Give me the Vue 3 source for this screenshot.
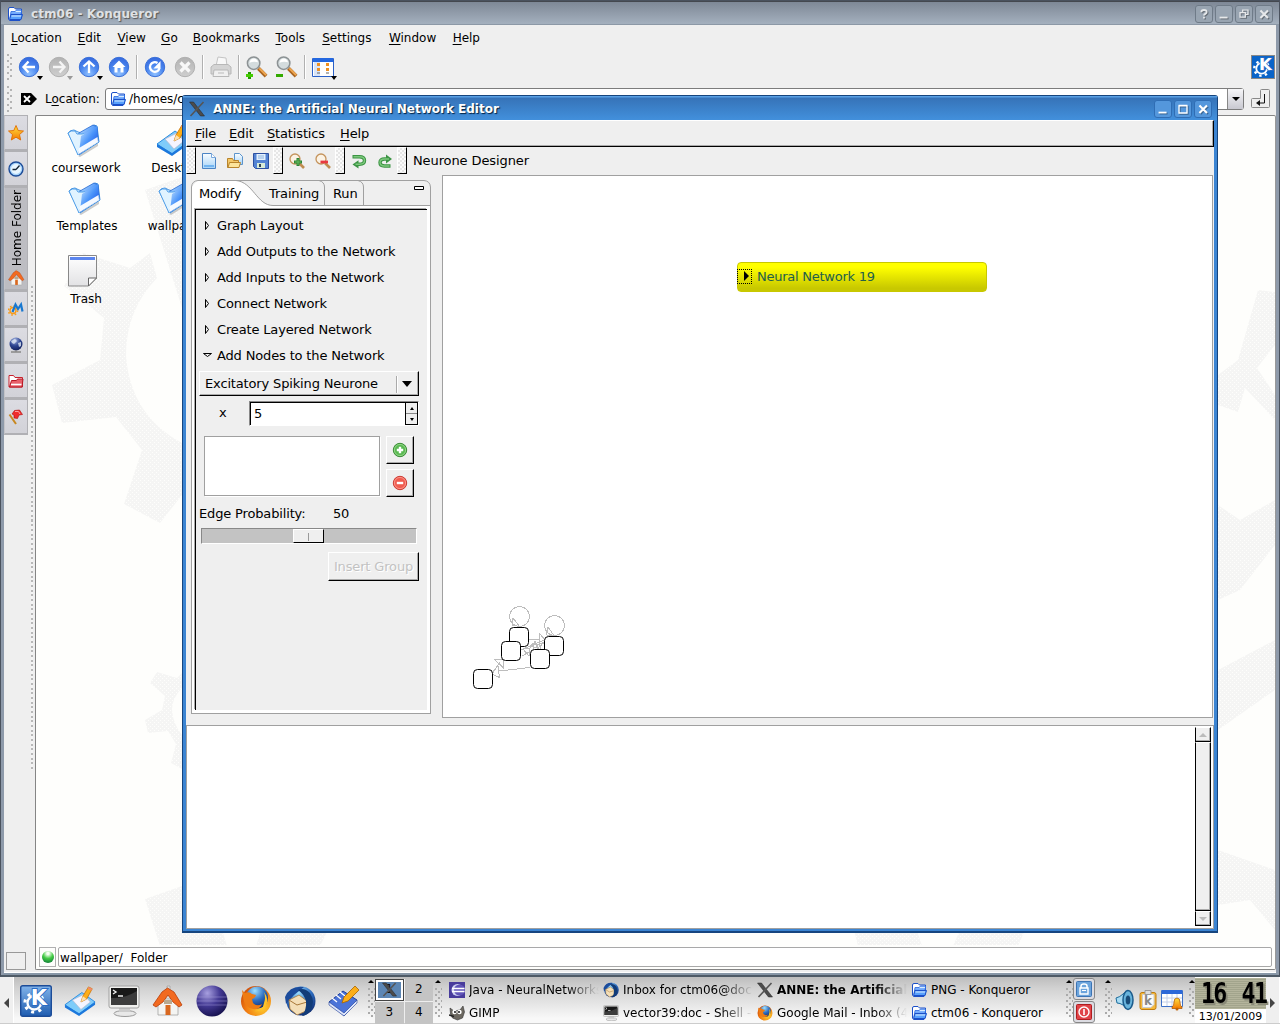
<script setup>
const konqMenu = [
  ['L', 'ocation', 50], ['E', 'dit', 23], ['V', 'iew', 27], ['G', 'o', 15], ['B', 'ookmarks', 66],
  ['T', 'ools', 30], ['S', 'ettings', 50], ['W', 'indow', 47], ['H', 'elp', 27]
]
const konqButtons = ['help', 'min', 'restore', 'close']
const anneButtons = ['min', 'max', 'close']
const tabsTop = ['star', 'clock']
const tabsBottom = ['metabar', 'globe', 'redfolder', 'pin']
const files = [
  { name: 'coursework', icon: 'folder3d', x: 48, y: 123 },
  { name: 'Desktop', icon: 'desk', x: 138, y: 123 },
  { name: 'Templates', icon: 'folder3d', x: 49, y: 181 },
  { name: 'wallpaper', icon: 'folder3d', x: 139, y: 181 },
  { name: 'Trash', icon: 'page', x: 48, y: 254 }
]
const anneMenu = [['F', 'ile', 'w-file'], ['E', 'dit', 'w-edit'], ['S', 'tatistics', 'w-stat'], ['H', 'elp', 'w-help']]
const sections = ['Graph Layout', 'Add Outputs to the Network', 'Add Inputs to the Network', 'Connect Network', 'Create Layered Network', 'Add Nodes to the Network']
const launchers = ['kmenu', 'desk', 'terminal', 'house', 'eclipse', 'firefox', 'thunderbird', 'notes']
const tasks = [
  { icon: 'javaee', text: 'Java - NeuralNetworks' },
  { icon: 'thunderbird', text: 'Inbox for ctm06@doc.ic' },
  { icon: 'xlogo', text: 'ANNE: the Artificial N', active: true },
  { icon: 'folder', text: 'PNG - Konqueror' },
  { icon: 'gimp', text: 'GIMP' },
  { icon: 'terminal', text: 'vector39:doc - Shell - K' },
  { icon: 'firefox', text: 'Google Mail - Inbox (41' },
  { icon: 'folder', text: 'ctm06 - Konqueror' }
]
const pager = [1, 2, 3, 4]
const nodes = [[509.5, 627.5], [501.5, 641.5], [544.5, 636.5], [530.5, 649.5], [473.5, 669.5]]
</script>

<template>
  <div class="desktop">
    <svg class="sprite" width="0" height="0">
      <defs>
        <radialGradient id="gBall" cx=".5" cy=".85" r=".9"><stop offset="0" stop-color="#8fc0ff" /><stop offset=".5" stop-color="#4a86ee" /><stop offset="1" stop-color="#3264dc" /></radialGradient>
        <linearGradient id="gGrey" x2="0" y2="1"><stop offset="0" stop-color="#b2b2b2" /><stop offset="1" stop-color="#cfcfcf" /></linearGradient>
        <linearGradient id="gFold" x2="1" y2="1"><stop offset="0" stop-color="#d8f0ff" /><stop offset=".5" stop-color="#4a94fa" /><stop offset="1" stop-color="#0a3ce0" /></linearGradient>
        <linearGradient id="gFoldS" x2="0" y2="1"><stop offset="0" stop-color="#9cc8ff" /><stop offset="1" stop-color="#2f78f4" /></linearGradient>
        <linearGradient id="gOrange" x2="0" y2="1"><stop offset="0" stop-color="#ffe040" /><stop offset="1" stop-color="#f47a00" /></linearGradient>
        <linearGradient id="gPage" x2="0" y2="1"><stop offset="0" stop-color="#fff" /><stop offset="1" stop-color="#e2e2e4" /></linearGradient>
        <linearGradient id="gDoc" x2="0" y2="1"><stop offset="0" stop-color="#fafdff" /><stop offset="1" stop-color="#a8d4f8" /></linearGradient>
        <radialGradient id="gEcl" cx=".35" cy=".25" r=".8"><stop offset="0" stop-color="#a8a0e0" /><stop offset=".5" stop-color="#443a94" /><stop offset="1" stop-color="#15104c" /></radialGradient>
        <radialGradient id="gBlueBall" cx=".4" cy=".2" r=".9"><stop offset="0" stop-color="#9fe0ff" /><stop offset=".5" stop-color="#2c6cc0" /><stop offset="1" stop-color="#0c2060" /></radialGradient>
        <radialGradient id="gNavy" cx=".4" cy=".2" r=".9"><stop offset="0" stop-color="#a8b8e4" /><stop offset=".5" stop-color="#2c4490" /><stop offset="1" stop-color="#0c1850" /></radialGradient>
        <radialGradient id="gFox" cx=".7" cy=".7" r=".9"><stop offset="0" stop-color="#ffd030" /><stop offset=".6" stop-color="#f07a10" /><stop offset="1" stop-color="#c03c08" /></radialGradient>
        <linearGradient id="gK" x2="0" y2="1"><stop offset="0" stop-color="#82b4ea" /><stop offset="1" stop-color="#1e5cb0" /></linearGradient>
        <pattern id="dither" width="4" height="4" patternUnits="userSpaceOnUse"><rect width="4" height="4" fill="#f5f5f4" /><rect width="1" height="1" fill="#fefefc" /><rect x="2" y="2" width="1" height="1" fill="#fefefc" /></pattern>
      </defs>

      <symbol id="folder" viewBox="0 0 16 16"><path d="M1.500 13V3Q1.500 1.500 3 1.500h4L8.500 3h6v9l-1.500 2.500H2.500z" fill="#fff" stroke="#1c50c8" /><path d="M3 12l1-6.500h4l1.500-1.500h5V6l-1.500 6.500z" fill="url(#gFoldS)" stroke="#2866e0" stroke-width=".8" /><path d="M2.500 13.500L4 8.500h11.500L14 13.500z" fill="#58a0fc" stroke="#1c50c8" /><path d="M4.500 10h9.500M9 5.500h5" stroke="#d8ecff" /></symbol>
      <symbol id="folder3d" viewBox="0 0 34 34"><path d="M12 33L32 20v3L14 34z" fill="#999" opacity=".5" /><path d="M2 10q2-3 6-3l4 2 4 1 12-8 3 1 2 16-20 13z" fill="#d9efff" stroke="#3b8de0" /><path d="M11 15l2-5L27 2l4 2 1 14-19 13z" fill="url(#gFold)" stroke="#2468d0" stroke-width=".8" /><path d="M2 10q3-3 7-2l2 3h5q2-1 3 1l-7 20z" fill="#e0f3ff" stroke="#4f9ee8" /><path d="M15 13L31 3l1 15-19 12z" fill="url(#gFold)" /><path d="M13 25l18.500-11 .5 5-20 12.500z" fill="#fff" opacity=".95" /></symbol>
      <symbol id="desk" viewBox="0 0 34 34"><path d="M1 21L19 8l14 10-17 13z" fill="#7fccfa" stroke="#2a8ce0" /><path d="M1 21l15 9 17-12v3L16 33 1 24z" fill="#1c78dc" /><path d="M9 16l12-6 7 8-10 8z" fill="#f4f4ff" stroke="#b8b8cc" stroke-width=".7" /><path d="M18 18l2-6 6-10 4 2-6 11z" fill="#fcae18" stroke="#c87000" stroke-width=".8" /><path d="M18 18l2-6 4 3z" fill="#fbe0b0" /><path d="M26 2l4 2-1 2-4-2z" fill="#f08a70" /></symbol>
      <symbol id="page" viewBox="0 0 34 34"><path d="M2.500 1.500h28V24l-8 8h-20z" fill="url(#gPage)" stroke="#888" /><path d="M4 3h25v3H4z" fill="#5c86ee" /><path d="M30.500 24h-8v8z" fill="#fff" stroke="#666" /></symbol>
      <symbol id="star" viewBox="0 0 16 16"><path d="M8 .5l2.200 5 5.300.5-4 3.600 1.200 5.400L8 12.200 3.300 15l1.200-5.400-4-3.600 5.300-.5z" fill="url(#gOrange)" stroke="#e06c00" stroke-width=".9" /></symbol>
      <symbol id="clock" viewBox="0 0 16 16"><circle cx="8" cy="8" r="7" fill="#a8d4fa" stroke="#1c4c98" stroke-width="1.400" /><circle cx="8" cy="8" r="5" fill="#e8f6ff" /><path d="M8 8.500l3.500-4M8 8.500H4.500" stroke="#123" stroke-width="1.300" /></symbol>
      <symbol id="metabar" viewBox="0 0 16 16"><circle cx="5" cy="9.500" r="3" fill="none" stroke="#f79a18" stroke-width="1.400" /><circle cx="5" cy="9.500" r="4.600" fill="none" stroke="#f79a18" stroke-width="1.500" stroke-dasharray="1.600 2" /><path d="M4.500 11L7.500 3.500l2.500 4.500L13 3.500l1.500 7" fill="none" stroke="#1878d0" stroke-width="2.200" /></symbol>
      <symbol id="globe" viewBox="0 0 16 16"><circle cx="8" cy="7" r="6.500" fill="url(#gNavy)" /><path d="M3 4l4-2 2 2-3 3-2-1zM10 6l3-1v4l-2 1z" fill="#dfe8f4" opacity=".8" /><path d="M3 15h10M8 13v2" stroke="#888" stroke-width="1.300" /></symbol>
      <symbol id="redfolder" viewBox="0 0 16 16"><path d="M1 14V2.500h4.500L7 4.500h7.500V14z" fill="#fff" stroke="#c8202c" /><path d="M1.500 14l2-6.500h5L9.500 6H15l-1 8z" fill="#e8606a" stroke="#b81824" /><path d="M3 11.500h10.500" stroke="#fff" stroke-width="1.600" /></symbol>
      <symbol id="pin" viewBox="0 0 16 16"><path d="M1.500 5.500L8 15" stroke="#c88820" stroke-width="2" /><path d="M4 5l2.500-3.500 5-.5 3 4.500-3.500.5-1.500 3.500-3.500-.5 0-3z" fill="#f02c2c" stroke="#b00c0c" stroke-width=".6" /><path d="M7 2.500h3.500L12 5" fill="none" stroke="#ff9c9c" /></symbol>
      <symbol id="house" viewBox="0 0 32 32"><path d="M6 14h20v16H6z" fill="#f4f4f2" stroke="#999" stroke-width=".7" /><path d="M15 1h3v4h-3z" fill="#ddd" stroke="#888" stroke-width=".5" /><path d="M15.500 3L10 7 1 20l3 2 7-5 5-7 5 7 6 5 3-2-8-13z" fill="#f26a20" stroke="#b83c08" stroke-width=".8" /><path d="M13.500 20h5v10h-5z" fill="#d86820" /><path d="M12 15h8v4h-8z" fill="#b8a890" /></symbol>
      <symbol id="bBack" viewBox="0 0 22 22"><circle cx="11" cy="11" r="9.700" fill="url(#gBall)" stroke="#3a70d8" /><path d="M10.500 5.500L5.500 11l5 5.500M6 11h11" fill="none" stroke="#fff" stroke-width="2.300" /></symbol>
      <symbol id="bFwd" viewBox="0 0 22 22"><circle cx="11" cy="11" r="9.700" fill="url(#gGrey)" stroke="#b0b0b0" /><path d="M11.500 5.500l5 5.500-5 5.500M16 11H5" fill="none" stroke="#f4f4f4" stroke-width="2.300" /></symbol>
      <symbol id="bUp" viewBox="0 0 22 22"><circle cx="11" cy="11" r="9.700" fill="url(#gBall)" stroke="#3a70d8" /><path d="M5.500 10.500L11 5.500l5.500 5M11 6v11" fill="none" stroke="#fff" stroke-width="2.300" /></symbol>
      <symbol id="bHome" viewBox="0 0 22 22"><circle cx="11" cy="11" r="9.700" fill="url(#gBall)" stroke="#3a70d8" /><path d="M11 4.500L4.500 11h2v5.500h3V12h3v4.500h3V11h2z" fill="#fff" /></symbol>
      <symbol id="bReload" viewBox="0 0 22 22"><circle cx="11" cy="11" r="9.700" fill="url(#gBall)" stroke="#3a70d8" /><path d="M13.500 7a4.800 4.800 0 1 0 2 5" fill="none" stroke="#fff" stroke-width="2.300" /><path d="M16.500 5v7.500H9.500z" fill="#fff" /></symbol>
      <symbol id="bStop" viewBox="0 0 22 22"><circle cx="11" cy="11" r="9.700" fill="url(#gGrey)" stroke="#b0b0b0" /><path d="M6.500 6.500l9 9m0-9l-9 9" stroke="#f8f8f8" stroke-width="3.200" /></symbol>
      <symbol id="printer" viewBox="0 0 22 22"><path d="M6 10L8 1l8 1 1 8z" fill="#f8f8f8" stroke="#c4c4c4" /><path d="M1 11l3-2.500h14L21 11v7H1z" fill="#d4d4d4" stroke="#b8b8b8" /><path d="M4 14h14l1 6.500H3z" fill="#f0f0f0" stroke="#b8b8b8" /><path d="M8 17h6" stroke="#bbb" /></symbol>
      <symbol id="lens" viewBox="0 0 23 23"><path d="M13 13l8 8" stroke="#a86420" stroke-width="4" /><path d="M14 13l7 7" stroke="#f0a850" stroke-width="2" /><circle cx="8" cy="7.500" r="6.500" fill="#d4dcde" stroke="#8c9294" stroke-width="1.600" /><path d="M3.500 7q1-4.500 5-4.500 4 1 4 4-4.500-1-9 .5z" fill="#fff" /></symbol>
      <symbol id="viewgrid" viewBox="0 0 22 20"><path d="M.5 1.500h21v18H.5z" fill="#fff" stroke="#2a60c8" /><path d="M1 1h20v4H1z" fill="#2468e0" /><path d="M2 5h6v14H2z" fill="#d8e4f8" /><path d="M5 6h3v3H5zM14 6h3v3h-3zM5 11h3v3H5zM14 11h3v3h-3z" fill="#f09020" /><path d="M5 16h3M14 16h3" stroke="#666" /></symbol>
      <symbol id="kgear" viewBox="0 0 24 24"><circle cx="10.500" cy="13.500" r="5.800" fill="none" stroke="#fff" stroke-width="2" /><circle cx="10.500" cy="13.500" r="8" fill="none" stroke="#fff" stroke-width="2.600" stroke-dasharray="2.600 3.680" /><text x="7.500" y="15" font-family="DejaVu Sans" font-weight="bold" font-size="18" fill="#fff" stroke="#2a6cc4" stroke-width="1.600" paint-order="stroke">K</text></symbol>
      <symbol id="kmenu" viewBox="0 0 32 32"><rect x=".7" y=".7" width="30.600" height="30.600" rx="2" fill="url(#gK)" stroke="#1c4c98" stroke-width="1.400" /><use href="#kgear" x="2" y="2" width="28" height="28" /></symbol>
      <symbol id="terminal" viewBox="0 0 32 32"><ellipse cx="17" cy="28.500" rx="11" ry="3" fill="#e8e8e8" stroke="#999" /><path d="M11 22h11v5H11z" fill="#ccc" /><rect x="1" y="1" width="30" height="22" rx="2" fill="#f0f0ee" stroke="#a0a0a0" /><path d="M3 3h26v17H3z" fill="#181818" /><path d="M3 13Q16 14 29 6v14H3z" fill="#3c3c3c" /><path d="M5 5l3 2-3 2M10 11h5" stroke="#eee" fill="none" stroke-width="1.400" /></symbol>
      <symbol id="eclipse" viewBox="0 0 32 32"><circle cx="16" cy="16" r="15.500" fill="url(#gEcl)" /><path d="M1 12h30M1 16h30M1 20h30" stroke="#a8a0dc" stroke-width="1" opacity=".45" /></symbol>
      <symbol id="javaee" viewBox="0 0 32 32"><path d="M0 0h32v32H0z" fill="#483c9c" /><circle cx="17" cy="16" r="12" fill="#ccd0f0" /><circle cx="21" cy="16" r="11" fill="#6054b8" /><path d="M6 13h25M6 19h25" stroke="#fff" stroke-width="3" /></symbol>
      <symbol id="firefox" viewBox="0 0 32 32"><circle cx="16" cy="16" r="15" fill="url(#gFox)" /><circle cx="17" cy="12.500" r="11" fill="url(#gBlueBall)" /><path d="M2 5l3 3q4-2 7 1l4 1q-1 3-4 4l1 4q4 4 9 1-2 6-9 5-9-2-10-12z" fill="#ee7c14" /><path d="M24 7q6 8 1 15-5 5-11 4 9 0 10-8 2-5 0-11z" fill="#ffc428" /></symbol>
      <symbol id="thunderbird" viewBox="0 0 32 32"><circle cx="17" cy="16" r="14.500" fill="url(#gBlueBall)" /><path d="M1 12Q6 0 20 2L10 10 2 19z" fill="#1c4c9c" /><path d="M5 15l10-5 8 6-1 10-9 4-7-6z" fill="#f4dfb8" stroke="#a87838" stroke-width=".8" /><path d="M5 15l8 5 10-3" fill="none" stroke="#a87838" /><path d="M14 5q6-3 12 3 6 9 0 18-4 5-8 5 5-7 4-15-2-7-8-11z" fill="#123c78" /></symbol>
      <symbol id="notes" viewBox="0 0 32 32"><path d="M1 17L15 6l14 9-13 16z" fill="#4c74d8" stroke="#1c3c98" /><path d="M1 17l15 11 13-13v3L16 31 1 20z" fill="#dfe6fa" stroke="#1c3c98" stroke-width=".6" /><path d="M4 13l5 4M8 10l5 4M12 7l5 4" stroke="#fff" stroke-width="1.300" /><path d="M14 18l2-6L27 1l4 4-11 11z" fill="#fcae18" stroke="#a86400" stroke-width=".8" /></symbol>
      <symbol id="xlogo" viewBox="0 0 16 16"><path d="M.5 1h4l11 14h-4z" fill="#4c4c4c" stroke="#222" stroke-width=".5" /><path d="M14.500 1L1.500 15" stroke="#555" stroke-width="1.600" /></symbol>
      <symbol id="gimp" viewBox="0 0 16 16"><path d="M1 3l4 3 6-1 3-4 1.500 6-2 6-5 2-5-2-2-4z" fill="#6c6860" stroke="#333" stroke-width=".6" /><circle cx="5.500" cy="7" r="2.200" fill="#fff" /><circle cx="10.500" cy="7" r="2.200" fill="#fff" /><circle cx="6" cy="7" r=".9" /><circle cx="10" cy="7" r=".9" /><path d="M0 10l5 1.500" stroke="#222" stroke-width="1.500" /></symbol>
      <symbol id="help" viewBox="0 0 18 18"><path d="M6 7q0-2.500 3-2.500t3 2.300q0 1.400-1.500 2Q9 9.500 9 10.800M9 12.200v2" fill="none" stroke="currentColor" stroke-width="2" /></symbol>
      <symbol id="min" viewBox="0 0 18 18"><path d="M4 13h9" stroke="currentColor" stroke-width="2" /></symbol>
      <symbol id="max" viewBox="0 0 18 18"><path d="M4.500 5.500h9v8h-9zM4 5h10" fill="none" stroke="currentColor" stroke-width="1.500" /></symbol>
      <symbol id="restore" viewBox="0 0 18 18"><path d="M4.500 7.500h6v5h-6zM7.500 7V4.500h6v5H11" fill="none" stroke="currentColor" stroke-width="1.400" /></symbol>
      <symbol id="close" viewBox="0 0 18 18"><path d="M5 5l8.500 8.500m0-8.500L5 13.500" stroke="currentColor" stroke-width="2.400" /></symbol>
      <symbol id="newdoc" viewBox="0 0 16 16"><path d="M1.500.5h9l4 4v11h-13z" fill="url(#gDoc)" stroke="#4c84c4" /><path d="M10.500.5v4h4" fill="#fff" stroke="#7aa8dc" /><path d="M3 13h10" stroke="#5ca8ec" stroke-width="1.500" /></symbol>
      <symbol id="opendoc" viewBox="0 0 16 16"><path d="M7.500.5h5l3 3v8h-8z" fill="url(#gDoc)" stroke="#5c94cc" /><path d="M.5 14.500v-9h5l1 2h5v7z" fill="#f4c868" stroke="#b8842c" /><path d="M1 14.500L2.500 9.500h11l-1.500 5z" fill="#fce49c" stroke="#b8842c" /></symbol>
      <symbol id="save" viewBox="0 0 16 16"><path d="M.5.5h15v15h-13l-2-2z" fill="#5484d4" stroke="#2c50a0" /><path d="M3.500 1h9v6h-9z" fill="#e4f0fc" /><path d="M5 3h6M5 5h6" stroke="#8cb4e0" /><path d="M4 10h8v5H4z" fill="#d8ecd8" /><path d="M6 11h2v3H6z" fill="#345" /></symbol>
      <symbol id="zin" viewBox="0 0 16 16"><path d="M10 10l5 5" stroke="#c08c50" stroke-width="2.600" /><circle cx="6" cy="6" r="5" fill="#fbf2e4" stroke="#c4935c" stroke-width="1.300" /><path d="M9 5v8M5 9h8" stroke="#2c8434" stroke-width="3" /><path d="M9 6v6M6 9h6" stroke="#68bc60" /></symbol>
      <symbol id="zout" viewBox="0 0 16 16"><path d="M10 10l5 5" stroke="#c08c50" stroke-width="2.600" /><circle cx="6" cy="6" r="5" fill="#fbf2e4" stroke="#c4935c" stroke-width="1.300" /><path d="M5.500 9h7.500" stroke="#e83840" stroke-width="2.800" /></symbol>
      <symbol id="undo" viewBox="0 0 16 16"><path d="M1.500 3.800h7q5 0 5 3.700t-5 3.700H7" fill="none" stroke="#3c9444" stroke-width="3.400" /><path d="M7.500 7.200V15.500L1.500 11.500z" fill="#3c9444" /><path d="M2.500 3.800h6q5 0 5 3.700t-5 3.700H4.500" fill="none" stroke="#7cc87c" stroke-width="1.400" /></symbol>
      <symbol id="redo" viewBox="0 0 16 16"><path d="M13.500 13H7.500Q3 13 3 9.500T7.500 6h2" fill="none" stroke="#3c9444" stroke-width="3.400" /><path d="M9 1.500v9L15 6z" fill="#3c9444" /><path d="M12.500 13h-5Q3 13 3 9.500T7.500 6h4.500" fill="none" stroke="#7cc87c" stroke-width="1.400" /></symbol>
      <symbol id="plus" viewBox="0 0 16 16"><circle cx="8" cy="8" r="6.700" fill="#58b850" stroke="#3c8c38" /><circle cx="8" cy="8" r="5.600" fill="none" stroke="#a0dc94" stroke-width=".8" /><path d="M8 4.800v6.400M4.800 8h6.400" stroke="#fff" stroke-width="2.400" /></symbol>
      <symbol id="minus" viewBox="0 0 16 16"><circle cx="8" cy="8" r="6.700" fill="#f05c50" stroke="#cc3c34" /><circle cx="8" cy="8" r="5.600" fill="none" stroke="#fca094" stroke-width=".8" /><path d="M4.800 8h6.400" stroke="#fff" stroke-width="2.400" /></symbol>
      <symbol id="lock" viewBox="0 0 16 16"><rect x=".5" y=".5" width="15" height="15" rx="1" fill="#6ca4dc" stroke="#3c74b4" /><path d="M5 7V5q0-2 3-2t3 2v2" fill="none" stroke="#fff" stroke-width="1.500" /><path d="M4 7h8v6H4z" fill="none" stroke="#fff" stroke-width="1.400" /><path d="M6 9.500h4" stroke="#fff" /></symbol>
      <symbol id="power" viewBox="0 0 16 16"><rect x=".5" y=".5" width="15" height="15" rx="1" fill="#e04448" stroke="#b01c20" /><circle cx="8" cy="8" r="5" fill="none" stroke="#fff" stroke-width="1.400" /><path d="M8 5v6" stroke="#fff" stroke-width="1.600" /></symbol>
      <symbol id="speaker" viewBox="0 0 22 22"><path d="M1 9q4-1 7-4l5-4 1 19-6-4q-3-2-6-2z" fill="#a8dcf4" stroke="#1c6c9c" /><ellipse cx="13" cy="11" rx="5" ry="9.500" fill="#68b4dc" stroke="#1c5c8c" stroke-width="1.500" /><ellipse cx="13" cy="11" rx="2.300" ry="4.500" fill="#184c78" /></symbol>
      <symbol id="klipper" viewBox="0 0 22 22"><rect x="2" y="3.500" width="16" height="17" rx="2" fill="#f4b83c" stroke="#c07c10" /><path d="M4.500 5.500h11.500v10l-3 3h-8.500z" fill="#fafafa" stroke="#ccc" /><path d="M7 1.500h6v4H7z" fill="#ddd" stroke="#999" /><text x="6" y="16" font-family="DejaVu Sans" font-size="12" font-weight="bold" fill="#888">k</text></symbol>
      <symbol id="alarm" viewBox="0 0 22 22"><path d="M.5 1.500h21v16H.5z" fill="#fff" stroke="#3c70c8" /><path d="M1 1h20v4H1z" fill="#2c68d8" /><path d="M6 5v12M11 5v12M16 5v12M1 9h20M1 13h20" stroke="#c4d0e8" /><path d="M11 18q2-1 2-5 0-4 3-4t3 4q0 4 2 5v1.500H11z" fill="url(#gOrange)" stroke="#a85000" stroke-width=".7" /><circle cx="16" cy="20" r="1.500" fill="#c06000" /></symbol>
    </svg>

    <section class="konq">
      <header class="k-title">
        <svg class="i16"><use href="#folder" /></svg>
        <b>ctm06 - Konqueror</b>
        <span v-for="b in konqButtons" :key="b" class="wbtn"><svg><use :href="'#' + b" /></svg></span>
      </header>
      <nav class="k-menu">
        <span v-for="m in konqMenu" :key="m[1]" :style="{ width: m[2] + 'px' }"><u>{{ m[0] }}</u>{{ m[1] }}</span>
      </nav>
      <div class="k-tools">
        <i class="grip"></i>
        <span class="tb drop"><svg><use href="#bBack" /></svg></span>
        <span class="tb drop off"><svg><use href="#bFwd" /></svg></span>
        <span class="tb drop"><svg><use href="#bUp" /></svg></span>
        <span class="tb"><svg><use href="#bHome" /></svg></span>
        <i class="vsep"></i>
        <span class="tb"><svg><use href="#bReload" /></svg></span>
        <span class="tb"><svg><use href="#bStop" /></svg></span>
        <i class="vsep"></i>
        <span class="tb"><svg><use href="#printer" /></svg></span>
        <i class="vsep"></i>
        <span class="tb"><svg><use href="#lens" /></svg><em class="plus"></em></span>
        <span class="tb"><svg><use href="#lens" /></svg><em class="minus"></em></span>
        <i class="vsep"></i>
        <span class="tb drop"><svg><use href="#viewgrid" /></svg></span>
        <span class="kbadge"><svg><use href="#kgear" /></svg></span>
      </div>
      <div class="k-loc">
        <i class="grip"></i>
        <svg class="clear" viewBox="0 0 16 12"><path d="M0 0h10l6 6-6 6H0z" /><path d="M3 3l6 6m0-6L3 9" stroke="#fff" stroke-width="1.800" /></svg>
        <label>L<u>o</u>cation:</label>
        <div class="combo"><svg class="i16"><use href="#folder" /></svg><span>/homes/c</span><b class="arrow"><i></i></b></div>
        <span class="go"><svg viewBox="0 0 20 20"><path d="M9.500 1.500q0-1 1-1h7q1 0 1 1v16q0 1-1 1h-16q-1 0-1-1v-7q0-1 1-1h8z" fill="#eee" stroke="#888" /><path d="M13.500 5v9H7" fill="none" stroke="#111" /><path d="M9 11v6l-4-3z" fill="#111" /></svg></span>
      </div>
      <div class="k-body">
        <aside class="k-side">
          <span v-for="t in tabsTop" :key="t" class="stab"><svg><use :href="'#' + t" /></svg></span>
          <span class="stab act"><b>Home Folder</b><svg><use href="#house" /></svg></span>
          <span v-for="t in tabsBottom" :key="t" class="stab"><svg><use :href="'#' + t" /></svg></span>
          <i class="corner"></i>
        </aside>
        <i class="split"></i>
        <main class="k-view">
          <svg class="gears" viewBox="36 116 1239 830" width="1239" height="830">
            <g fill="url(#dither)">
              <path d="M83 253L130 268 150 253 157 278Q126 310 126 355 130 415 182 443V495L160 523 124 504 142 450 116 417 62 423 52 385 100 360 104 318 64 286z" />
              <path d="M145 190L182 177V308z" />
              <path d="M157 672L177 678 182 673V688Q172 698 172 710 173 724 182 735V769L171 763 176 744 168 731 148 733 145 720 162 710 165 696 150 683z" />
              <path d="M145 899L182 886 216 910 227 946H160z M261 930H328L320 946H256zM854 930H917L922 946H858zM960 930H1025L1018 946H953z" />
              <path d="M1218 375L1238 360 1258 290 1275 292V345L1257 368 1275 395V420L1245 388 1238 412 1218 405z" />
              <path d="M1218 505L1240 520 1275 500V545L1240 590 1218 600zM1218 670L1275 640V690L1218 730zM1218 850L1275 870V930L1250 900 1218 905z" />
            </g>
          </svg>
          <figure v-for="f in files" :key="f.name" :style="{ left: f.x - 36 + 'px', top: f.y - 116 + 'px' }">
            <svg><use :href="'#' + f.icon" /></svg><figcaption>{{ f.name }}</figcaption>
          </figure>
          <footer class="k-status">
            <span class="led"><i></i></span><span class="msg">wallpaper/&nbsp; Folder</span>
          </footer>
        </main>
      </div>
    </section>

    <section class="anne">
      <header class="a-title">
        <svg class="i16"><use href="#xlogo" /></svg>
        <b>ANNE: the Artificial Neural Network Editor</b>
        <span v-for="b in anneButtons" :key="b" class="wbtn"><svg><use :href="'#' + b" /></svg></span>
      </header>
      <nav class="a-menu">
        <span v-for="m in anneMenu" :key="m[1]" :class="m[2]"><u>{{ m[0] }}</u>{{ m[1] }}</span>
      </nav>
      <div class="a-tools">
        <i class="handle"></i>
        <svg><use href="#newdoc" /></svg><svg><use href="#opendoc" /></svg><svg><use href="#save" /></svg>
        <i class="handle"></i>
        <svg><use href="#zin" /></svg><svg><use href="#zout" /></svg>
        <i class="handle"></i>
        <svg><use href="#undo" /></svg><svg><use href="#redo" /></svg>
        <i class="handle"></i>
        <span>Neurone Designer</span>
      </div>
      <div class="a-body">
        <div class="folder">
          <svg class="tabshape" width="240" height="28" viewBox="0 0 240 28">
            <path d="M.5 28V7L6.500.5H45C62 2 66 25.500 82 25.500H0z" fill="#fff" />
            <path d="M.5 28V7Q1 1 7 .5H233Q239 1 239.500 7V28M45 .5C62 2 66 25.500 82 25.500H239.500M128 .5Q133.500 2 133.500 7V25.500M167 .5Q172.500 2 172.500 7V25.500" fill="none" stroke="#a0a0a0" />
            <path d="M223.500 6.500h9v3h-9z" fill="#fff" stroke="#000" />
          </svg>
          <div class="tabs"><span>Modify</span><span>Training</span><span>Run</span></div>
          <div class="scroll">
            <p v-for="(s, i) in sections" :key="s" class="sec">
              <svg width="9" height="9" viewBox="0 0 9 9"><path :d="i < 5 ? 'M2.500 .5v8L5.500 4.500z' : 'M.5 2.500h8L4.500 5.500z'" fill="none" stroke="#000" /></svg>{{ s }}
            </p>
            <div class="select"><span>Excitatory Spiking Neurone</span><i></i><b></b></div>
            <div class="count">
              <span>x</span>
              <div class="spin"><em>5</em><div><i class="up"></i><i class="dn"></i></div></div>
            </div>
            <div class="group">
              <div class="list"></div>
              <div class="pm"><button><svg><use href="#plus" /></svg></button><button><svg><use href="#minus" /></svg></button></div>
            </div>
            <div class="prob"><span>Edge Probability:</span><span>50</span></div>
            <div class="slider"><i></i></div>
            <button class="insert">Insert Group</button>
          </div>
        </div>
        <div class="canvas">
          <svg width="769" height="541" viewBox="443 176 769 541">
            <g fill="none" stroke="#bdbdbd" shape-rendering="crispEdges">
              <circle cx="519.500" cy="616.500" r="10" /><circle cx="554.500" cy="625.500" r="10" />
              <path d="M513 618L519.500 626.500 512 625zM548 627L554 635.500 546.500 635zM529 639.500H540M539.500 633.500L546 641 539.500 646zM494.500 659.500L504 660 503.500 668zM493 672L500 662M498 665.500L499.500 677.500 492 674zM499 671L530 667.500M521 650L544 640M535 641l-2 8 6 1zM530 646l5-4 2 6zM523 649l7-1-1 8zM529 652l-7 4M540 650l2-7-6 2z" />
            </g>
            <rect v-for="(n, i) in nodes" :key="i" :x="n[0]" :y="n[1]" width="19" height="19" rx="4" fill="#fff" stroke="#000" />
          </svg>
          <div class="net"><i><svg width="5" height="10"><path d="M0 0L5 5 0 10z" /></svg></i><span>Neural Network 19</span></div>
        </div>
      </div>
      <div class="console">
        <div class="sbar"><b class="up"><i></i></b><b class="thumb"></b><b class="dn"><i></i></b></div>
      </div>
    </section>

    <footer class="panel">
      <i class="hide l"></i>
      <div class="launch"><svg v-for="l in launchers" :key="l"><use :href="'#' + l" /></svg></div>
      <i class="pgrip"></i>
      <div class="pager"><span v-for="p in pager" :key="p" :class="{ on: p === 1 }"><svg v-if="p === 1"><use href="#xlogo" /></svg>{{ p }}</span></div>
      <i class="pgrip"></i>
      <div class="tasks">
        <span v-for="t in tasks" :key="t.text" :class="{ bold: t.active }"><svg><use :href="'#' + t.icon" /></svg><em>{{ t.text }}</em></span>
      </div>
      <i class="pgrip"></i>
      <div class="session"><span><svg><use href="#lock" /></svg></span><span><svg><use href="#power" /></svg></span></div>
      <i class="pgrip"></i>
      <div class="tray"><svg><use href="#speaker" /></svg><svg><use href="#klipper" /></svg><svg><use href="#alarm" /></svg></div>
      <i class="pgrip"></i>
      <div class="lcd"><div><b>16</b><b>41</b></div><span>13/01/2009</span></div>
      <i class="hide r"></i>
    </footer>
  </div>
</template>

<style>
html, body { margin: 0; overflow: hidden; }
</style>

<style scoped>
* { box-sizing: border-box; }
i, em { font-style: normal; }
p, figure { margin: 0; }
u { text-underline-offset: 2px; text-decoration-thickness: 1px; }
.sprite { position: absolute; }
.desktop { position: relative; width: 1280px; height: 1024px; display: flex; flex-direction: column; overflow: hidden; background: #efefef; font: 12px/16px "DejaVu Sans", sans-serif; color: #000; }
.i16 { width: 16px; height: 16px; flex: none; }

.konq { height: 977px; display: flex; flex-direction: column; background: #efefef; border-left: 4px solid #8e9aaa; border-right: 4px solid #8e9aaa; border-bottom: 4px solid #8796a6; box-shadow: inset 0 -1px #fff; position: relative; flex: none; }
.konq::before { content: ""; position: absolute; inset: 0 -4px -4px -4px; border: 1px solid #4a525e; border-bottom: 2px solid #4e5a66; pointer-events: none; }
.k-title { height: 25px; flex: none; margin: 0 -3px; padding: 2px 6px 0 6px; display: flex; align-items: center; background: linear-gradient(#44484f 0 2px, #7e8896 2px, #a4b0be 24px, #8c98a6 24px); color: #dfe1e4; }
.k-title b { font-size: 12px; margin-left: 8px; flex: 1; text-shadow: 1px 1px 1px #555; letter-spacing: .05px; }
.wbtn { width: 18px; height: 18px; margin-left: 2px; border: 1px solid #6f7b88; border-radius: 3px; background: #98a4b1; color: #e6e8ea; display: flex; }
.wbtn svg { width: 16px; height: 16px; filter: drop-shadow(1px 1px 0 #0005); }
.k-menu { height: 27px; flex: none; display: flex; gap: 17px; align-items: center; padding: 0 0 2px 7px; white-space: nowrap; }
.k-menu span:nth-child(n+2) { margin-left: -.3px; }
.k-tools { height: 31px; flex: none; display: flex; align-items: center; padding: 0 0 2px 3px; }
.grip { width: 6px; height: 26px; flex: none; background: radial-gradient(circle at 1px 1px, #b4b4b4 1px, transparent 1.300px) 0 0/6px 6px, radial-gradient(circle at 4px 4px, #b4b4b4 1px, transparent 1.300px) 0 0/6px 6px; }
.tb { width: 22px; height: 22px; margin-left: 8px; position: relative; flex: none; }
.grip + .tb { margin-left: 5px; }
.vsep + .tb { margin-left: 6px; }
.tb svg { width: 22px; height: 22px; display: block; }
.tb.drop::after { content: ""; position: absolute; right: -3px; bottom: -2px; border: 3px solid transparent; border-top: 4px solid #000; border-bottom: 0; }
.tb.off::after { border-top-color: #999 !important; }
.tb em { position: absolute; left: 0; bottom: -1px; width: 7px; height: 7px; background: linear-gradient(#3a0, #3a0) 0 50%/7px 3px no-repeat; }
.tb em.plus { background: linear-gradient(#4c0, #4c0) 0 50%/7px 3px no-repeat, linear-gradient(#290, #290) 50% 0/3px 7px no-repeat; }
.vsep { width: 2px; height: 24px; margin-left: 6px; border-left: 1px solid #b0b0b0; background: #fff; }
.kbadge { margin-left: auto; margin-right: 1px; width: 24px; height: 24px; background: #0a64c8; border: 1px solid #888; display: flex; }
.kbadge svg { width: 22px; height: 22px; }
.k-loc { height: 32px; flex: none; display: flex; align-items: center; padding-left: 3px; }
.clear { width: 16px; height: 12px; margin: 0 8px 0 8px; }
.k-loc label { width: 60px; flex: none; white-space: nowrap; }
.combo { flex: 1; height: 22px; border: 1px solid #7c7c7c; border-radius: 3px; background: #fff; display: flex; align-items: center; padding-left: 4px; }
.combo span { flex: 1; margin-left: 3px; }
.arrow { width: 16px; height: 20px; background: linear-gradient(#f6f6f8, #c8c8d0); border-left: 1px solid #888; display: flex; align-items: center; justify-content: center; }
.arrow i { border: 4px solid transparent; border-top: 4px solid #000; border-bottom: 0; }
.go { width: 20px; height: 20px; margin: 0 5px 0 7px; }
.go svg { width: 20px; height: 20px; }
.k-body { flex: 1; display: flex; min-height: 0; }
.k-side { width: 24px; display: flex; flex-direction: column; }
.stab { width: 24px; height: 36px; flex: none; border: 1px solid #b0b0b4; border-left-color: #c4c4c8; border-bottom-width: 2px; background: linear-gradient(#dcdce2, #d2d2d8); display: flex; align-items: center; justify-content: center; }
.stab svg { width: 16px; height: 16px; flex: none; }
.stab.act { height: 104px; background: #bdbdc2; flex-direction: column; justify-content: space-between; padding: 2px 0 3px; }
.stab.act b { font-weight: normal; writing-mode: vertical-rl; transform: rotate(180deg); line-height: 18px; white-space: nowrap; margin-left: 2px; }
.stab.act svg { width: 17px; height: 17px; }
.corner { margin: auto 0 0 2px; width: 20px; height: 18px; border: 1px solid #999; margin-bottom: 3px; }
.split { width: 2px; margin: 171px 2px 0 3px; height: 484px; background: repeating-linear-gradient(#b8b8b8 0 2px, #f4f4f4 2px 4.670px); }
.k-view { flex: 1; border: 1px solid #858585; border-right-color: #999; background: #fefefc; position: relative; display: flex; flex-direction: column; justify-content: flex-end; margin-bottom: 3px; border-radius: 2px; overflow: hidden; }
.gears { position: absolute; left: 0; top: 0; }
.k-view figure { position: absolute; width: 76px; display: flex; flex-direction: column; align-items: center; }
.k-view figure svg { width: 34px; height: 34px; margin-left: -6px; }
.k-view figcaption { margin-top: 3px; }
.k-status { height: 24px; background: #fefefc; display: flex; gap: 2px; padding: 2px 3px 2px; position: relative; }
.led { width: 17px; border: 1px solid #b0b0b0; display: flex; align-items: center; justify-content: center; }
.led i { width: 12px; height: 12px; border-radius: 50%; background: radial-gradient(circle at 50% 20%, #f4fff0 10%, #4c4 45%, #063 100%); }
.msg { flex: 1; border: 1px solid #a8a8a8; background: #fff; padding-left: 1px; line-height: 20px; border-radius: 2px; }

.anne { position: absolute; left: 182px; top: 95px; width: 1036px; height: 838px; border: 1px solid #16457e; border-width: 1px 1px 2px; background: #efefef; box-shadow: inset 0 0 0 3px #3b84d2; padding: 0 3px 3px; display: flex; flex-direction: column; font-size: 13px; border-radius: 3px 3px 0 0; letter-spacing: -.15px; }
.a-title { height: 24px; flex: none; margin: 0 -3px; padding: 1px 5px 0 7px; display: flex; align-items: center; background: linear-gradient(#5aa0e4 0 1px, #3673b8 2px, #4290dc); color: #fff; }
.a-title svg.i16 { margin-left: -1px; }
.a-title b { flex: 1; margin-left: 8px; font-size: 12px; letter-spacing: 0; text-shadow: 1px 1px 1px #024; white-space: nowrap; }
.a-title .wbtn { border-color: #2f6db4; background: #5497dc; color: #fff; }
.a-menu { height: 27px; flex: none; border: 1px solid #fff; border-right: 1px solid #000; border-bottom: 1px solid #000; box-shadow: inset -1px -1px #aaa; display: flex; align-items: center; padding-left: 8px; }
.a-menu span { white-space: nowrap; }
.w-file { width: 34px; } .w-edit { width: 38px; } .w-stat { width: 73px; }
.a-tools { height: 27px; flex: none; display: flex; align-items: center; }
.handle { width: 10px; height: 27px; border: 1px solid #fff; border-right: 1px solid #000; border-bottom: 1px solid #000; background: conic-gradient(#e6e6e6 25%, #fafafa 0 50%, #e6e6e6 0 75%, #fafafa 0) 0 0/4px 4px; }
.a-tools svg { width: 16px; height: 16px; margin-left: 10px; flex: none; }
.a-tools svg + .handle { margin-left: 4px; width: 10px; }
.a-tools .handle + svg { margin-left: 5px; }
.a-tools .handle ~ .handle + svg { margin-left: 6px; }
.a-tools span { margin-left: 6px; letter-spacing: -.1px; }
.a-body { height: 545px; flex: none; display: flex; }
.folder { width: 240px; height: 534px; margin: 6px 11px 0 5px; border: 1px solid #a0a0a0; border-top: 0; position: relative; background: #fff; display: flex; flex-direction: column; padding: 0 3px 3px 3px; }
.tabshape { position: absolute; left: -1px; top: 0; background: linear-gradient(#efefef 25px, #fff 25px); }
.tabs { height: 28px; position: relative; display: flex; flex: none; line-height: 28px; margin-left: -1px; }
.tabs span:nth-child(1) { margin-left: 5px; width: 70px; }
.tabs span:nth-child(2) { width: 64px; }
.scroll { flex: 1; background: #efefef; border-left: 1px solid #000; border-top: 1px solid #000; box-shadow: -1px -1px #aaa; padding: 4px 8px 0 3px; display: flex; flex-direction: column; margin-top: 1px; }
.sec { height: 26px; line-height: 22px; display: flex; align-items: center; padding-bottom: 3px; white-space: nowrap; }
.sec svg { margin: 0 5px 0 4px; flex: none; }
.select { height: 25px; margin-top: 1px; border: 1px solid #fff; border-right: 1px solid #000; border-bottom: 1px solid #000; box-shadow: inset -1px -1px #aaa; display: flex; align-items: center; padding: 1px 1px 0 5px; flex: none; white-space: nowrap; }
.select span { flex: 1; }
.select i { height: 17px; border-left: 1px solid #aaa; border-right: 1px solid #fff; }
.select b { margin: 0 5px 0 4px; border: 5px solid transparent; border-top: 6px solid #000; border-bottom: 0; }
.count { display: flex; margin-top: 5px; height: 25px; flex: none; }
.count > span { width: 50px; padding-left: 20px; line-height: 23px; }
.spin { flex: 1; border: 1px solid #888; border-right-color: #fff; border-bottom-color: #fff; box-shadow: inset 1px 1px #000; background: #fff; display: flex; justify-content: space-between; padding: 1px 0 0 4px; line-height: 22px; }
.spin div { width: 13px; border: 1px solid #000; border-top: 0; background: #efefef; display: flex; flex-direction: column; }
.spin i { flex: 1; display: flex; align-items: center; justify-content: center; border-bottom: 1px solid #888; }
.spin .dn { border: 0; }
.spin i::after { content: ""; border: 2px solid transparent; border-bottom: 3px solid #000; border-top: 0; }
.spin .dn::after { border: 2px solid transparent; border-top: 3px solid #000; border-bottom: 0; }
.group { display: flex; justify-content: space-between; margin: 10px 5px 0 5px; height: 62px; flex: none; }
.list { width: 176px; height: 60px; border: 1px solid #a0a0a0; background: #fff; box-shadow: 1px 1px #fff; }
.pm { display: flex; flex-direction: column; gap: 5px; }
button { font: inherit; letter-spacing: inherit; padding: 0; border-radius: 0; background: #efefef; border: 1px solid #fff; border-right: 1px solid #000; border-bottom: 1px solid #000; box-shadow: inset -1px -1px #aaa; }
.pm button { width: 28px; height: 28px; display: flex; align-items: center; justify-content: center; }
.pm svg { width: 16px; height: 16px; }
.prob { display: flex; height: 30px; line-height: 32px; flex: none; }
.prob span:first-child { width: 134px; }
.slider { height: 16px; margin: 0 2px 0; background: #c3c3c3; border: 1px solid #888; border-right-color: #fff; border-bottom-color: #fff; flex: none; padding-left: 91px; }
.slider i { display: block; width: 31px; height: 14px; border: 1px solid #fff; border-right: 1px solid #000; border-bottom: 1px solid #000; background: linear-gradient(#999, #999) 14px 3px/1px 8px no-repeat, #efefef; }
.insert { width: 91px; height: 29px; margin-top: 8px; align-self: flex-end; color: #c2c2c2; text-shadow: 1px 1px #fff; flex: none; white-space: nowrap; }
.canvas { width: 771px; height: 543px; margin-top: 1px; border: 1px solid #a0a0a0; background: #fff; position: relative; }
.canvas > svg { display: block; }
.net { position: absolute; left: 294px; top: 86px; width: 250px; height: 30px; border: 1px solid #c8c800; border-radius: 4px; background: linear-gradient(#ff0 15%, #c8c800 90%); display: flex; align-items: center; color: #23604a; letter-spacing: -.25px; }
.net i { width: 15px; height: 15px; border: 1px dotted #000; margin-left: -1px; margin-top: -1px; padding: 1px 0 0 6px; display: flex; }
.net span { margin-left: 5px; }
.console { height: 204px; margin-top: 6px; border: 1px solid #a0a0a0; background: #fff; display: flex; justify-content: flex-end; padding: 1px 2px 2px; width: 1028px; flex: none; }
.sbar { width: 16px; background: #efefef; display: flex; flex-direction: column; }
.sbar b { border: 1px solid #fff; border-left: 1px solid #000; border-right: 1px solid #000; border-bottom: 1px solid #000; box-shadow: inset -1px -1px #aaa; background: #efefef; display: flex; align-items: center; justify-content: center; height: 15px; flex: none; }
.sbar .thumb { flex: 1; }
.sbar i { border: 4px solid transparent; border-bottom: 4px solid #bbb; border-top: 0; }
.sbar .dn i { border: 4px solid transparent; border-top: 4px solid #bbb; border-bottom: 0; }

.panel { height: 47px; flex: none; display: flex; background: linear-gradient(#bdbdbd, #d2d2d2 25%, #f8f8f8 90%); border-bottom: 1px solid #ccc; }
.hide { width: 14px; background: #efefef; display: flex; align-items: center; justify-content: center; flex: none; border-right: 1px solid #fff; }
.hide::after { content: ""; border: 5px solid transparent; border-right: 5px solid #444; border-left: 0; margin-top: 5px; }
.hide.r::after { border: 5px solid transparent; border-left: 5px solid #444; border-right: 0; }
.launch { display: flex; gap: 12px; padding: 8px 0 0 6px; width: 353px; flex: none; }
.launch svg { width: 32px; height: 32px; flex: none; }
.pgrip { width: 8px; flex: none; position: relative; margin-top: 10px; background: radial-gradient(circle at 2px 2px, #aaa 1px, transparent 1.400px) 0 0/6px 6px, radial-gradient(circle at 5px 5px, #aaa 1px, transparent 1.400px) 0 0/6px 6px; margin-bottom: 5px; }
.pgrip::before { content: ""; position: absolute; left: 1px; top: -7px; border: 3px solid transparent; border-bottom: 3px solid #000; border-top: 0; }
.pager { width: 58px; margin-top: 2px; display: grid; grid-template-columns: 1fr 1fr; grid-template-rows: 22px 22px; gap: 1px; background: #eee; flex: none; }
.pager span { background: #c4c4c4; text-align: center; line-height: 21px; position: relative; }
.pager .on { background: #5c86b4; border: 1px solid #444; box-shadow: inset 0 0 0 2px #fff; line-height: 18px; color: #111; }
.pager svg { position: absolute; left: 5px; top: 2px; width: 17px; height: 15px; }
.tasks { width: 623px; flex: none; display: grid; grid-template-columns: repeat(4, 154px); grid-template-rows: 23px 23px; padding: 1px 0 0 7px; }
.pager + .pgrip { margin-left: 1px; }
.tasks span { display: flex; align-items: center; overflow: hidden; white-space: nowrap; }
.tasks svg { width: 16px; height: 16px; flex: none; margin-right: 4px; }
.tasks em { width: 130px; overflow: hidden; -webkit-mask: linear-gradient(90deg, #000 98px, transparent 130px); mask: linear-gradient(90deg, #000 98px, transparent 130px); }
.tasks span:nth-child(4n) em { -webkit-mask: none; mask: none; }
.tasks .bold { font-weight: bold; }
.session { width: 30px; flex: none; }
.session span { width: 22px; height: 22px; margin-top: 1px; border: 1px solid #888; border-radius: 3px; background: #dcdce2; display: flex; align-items: center; justify-content: center; }
.session svg { width: 16px; height: 16px; }
.tray { display: flex; align-items: center; width: 76px; flex: none; padding-left: 3px; gap: 1px; }
.session + .pgrip { margin-left: 1px; }
.tray svg { width: 22px; height: 22px; }
.tray + .pgrip { width: 7px; }
.lcd { flex: 1; background: #fff; text-align: center; white-space: nowrap; padding-top: 1px; }
.lcd div { height: 31px; background: repeating-linear-gradient(#b4b49c 0 1px, #a2a48c 1px 2px); display: flex; justify-content: space-between; padding: 0 2px 0 6px; }
.lcd b { width: 28px; font: bold 29px/31px "DejaVu Sans Mono", monospace; letter-spacing: -2px; text-shadow: 2px 2px #8a8a78; transform: scaleX(.8); transform-origin: 0 0; }
.lcd b + b { transform-origin: 100% 0; }
.lcd span { display: block; font-size: 11px; line-height: 15px; }
</style>
